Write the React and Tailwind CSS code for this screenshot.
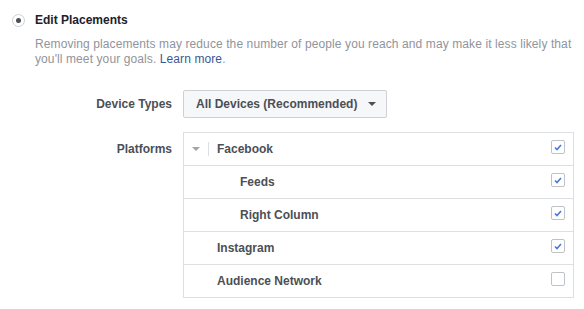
const platforms = [
  { name: "Facebook", indent: "pl-[8px]", caret: true, checked: true },
  { name: "Feeds", indent: "pl-[56px]", checked: true },
  { name: "Right Column", indent: "pl-[56px]", checked: true },
  { name: "Instagram", indent: "pl-[33px]", checked: true },
  { name: "Audience Network", indent: "pl-[33px]", checked: false },
];

const Checkbox = ({ checked }) => (
  <span className="w-[14px] h-[14px] border border-[#bec3c9] rounded-[2px] bg-white flex items-center justify-center">
    {checked && (
      <svg width="10" height="10" viewBox="0 0 10 10">
        <path d="M2 5.5 L4 7.5 L8 3" fill="none" stroke="#4a76e0" strokeWidth="1.6" />
      </svg>
    )}
  </span>
);

const App = () => {
  return (
    <div className="w-[584px] h-[309px] bg-white font-['Liberation_Sans',Arial,sans-serif] text-[12px] overflow-hidden">
      {/* Radio + title */}
      <div className="pt-[12px] flex items-center h-[28px]">
        <span className="ml-[12px] w-[13px] h-[13px] rounded-full border border-[#ccd0d5] bg-white flex items-center justify-center">
          <span className="w-[5px] h-[5px] rounded-full bg-[#4b4f56]" />
        </span>
        <span className="ml-[10px] font-bold text-[#1d2129] leading-[16px]">Edit Placements</span>
      </div>

      {/* Description */}
      <p className="mt-[9px] pl-[35px] leading-[15px] tracking-[0.1px] text-[#90949c]">
        Removing placements may reduce the number of people you reach and may make it less likely that
        you'll meet your goals. <span className="text-[#365899]">Learn more</span>.
      </p>

      {/* Form */}
      <div className="mt-[23px] grid grid-cols-[172px_1fr] gap-x-[11px] gap-y-[14px]">
        <div className="h-[28px] flex items-center justify-end font-bold text-[#4b4f56]">Device Types</div>
        <div>
          <button className="h-[28px] w-[204px] flex items-center whitespace-nowrap pl-[12px] pr-[11px] gap-[11px] bg-[#f6f7f9] border border-[#ced0d4] rounded-[2px] font-bold text-[#4b4f56]">
            All Devices (Recommended)
            <span className="w-0 h-0 border-x-[4px] border-x-transparent border-t-[4px] border-t-[#4b4f56]" />
          </button>
        </div>

        <div className="h-[33px] flex items-center justify-end font-bold text-[#4b4f56]">Platforms</div>
        <div className="w-[391px] border border-[#dddfe2]">
          {platforms.map((p, i) => (
            <div
              key={p.name}
              className={`h-[32px] flex items-center pr-[8px] ${p.indent} ${i > 0 ? "border-t border-[#dddfe2] h-[33px]" : ""}`}
            >
              {p.caret && (
                <>
                  <span className="w-0 h-0 border-x-[4px] border-x-transparent border-t-[4px] border-t-[#a0a4ab]" />
                  <span className="ml-[8px] w-px h-[14px] bg-[#dddfe2]" />
                  <span className="ml-[8px]" />
                </>
              )}
              <span className="flex-1 font-bold text-[#4b4f56]">{p.name}</span>
              <span className="-mt-[4px]">
                <Checkbox checked={p.checked} />
              </span>
            </div>
          ))}
        </div>
      </div>
    </div>
  );
};

export default App;
